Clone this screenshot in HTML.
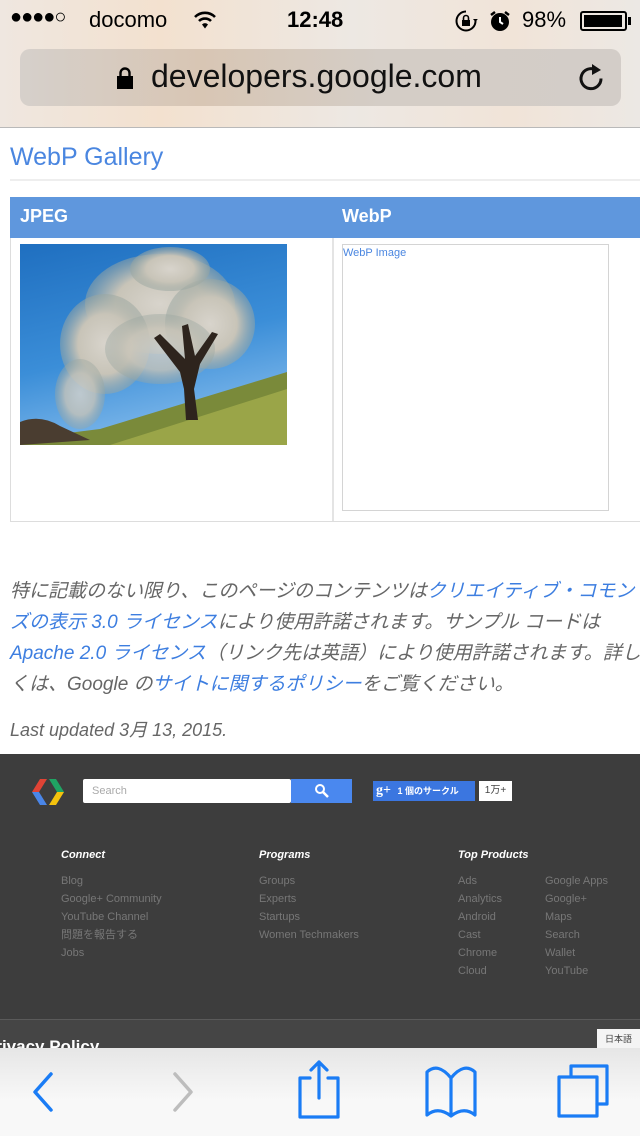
<!DOCTYPE html>
<html><head><meta charset="utf-8">
<style>
*{margin:0;padding:0;box-sizing:border-box}
body{width:640px;height:1136px;overflow:hidden;background:#fff;font-family:"Liberation Sans","Noto Sans CJK JP",sans-serif;position:relative}
.abs{position:absolute}
#top{left:0;top:0;width:640px;height:128px;background:linear-gradient(90deg,#efe7e0 0%,#f3e1cf 25%,#ede8e3 55%,#f1e4d8 80%,#ece8e4 100%);border-bottom:1px solid #b9b9b9}
.sb{font-size:22px;color:#000;top:7px}
#url{left:20px;top:49px;width:601px;height:57px;border-radius:10px;background:linear-gradient(90deg,#d6d0cb,#d8c6b4 30%,#d4cdc6 60%,#d3cdc8)}
.ft{color:#777;font-size:11px;line-height:18px}
.fh{color:#fff;font-size:11px;font-weight:bold;font-style:italic}
.blue{color:#3d7ee0}
</style></head><body>
<div id="top" class="abs">
  <div class="abs sb" style="left:10px;top:6px;font-size:20px;letter-spacing:-1px">●●●●○</div>
  <div class="abs sb" style="left:89px">docomo</div>
  <svg class="abs" style="left:193px;top:10px" width="24" height="20" viewBox="0 0 24 20"><path d="M2 7a14 14 0 0 1 20 0" stroke="#000" stroke-width="2.6" fill="none"/><path d="M6 11a8.5 8.5 0 0 1 12 0" stroke="#000" stroke-width="2.6" fill="none"/><path d="M9 14.5l3 4 3-4a4 4 0 0 0-6 0z" fill="#000"/></svg>
  <div class="abs sb" style="left:287px;font-weight:bold">12:48</div>
  <svg class="abs" style="left:454px;top:9px" width="24" height="24" viewBox="0 0 24 24"><path d="M12 2.5a9.5 9.5 0 1 0 9.5 9.5" stroke="#000" stroke-width="2" fill="none"/><path d="M19 10l2.5 3 2.3-3z" fill="#000"/><rect x="8" y="11" width="8" height="6" fill="#000"/><path d="M9.5 11V9a2.5 2.5 0 0 1 5 0v2" stroke="#000" stroke-width="1.6" fill="none"/></svg>
  <svg class="abs" style="left:488px;top:9px" width="24" height="24" viewBox="0 0 24 24"><circle cx="12" cy="13" r="9" fill="#000"/><path d="M12 8v5l3 2" stroke="#fff" stroke-width="2" fill="none"/><path d="M3 6l4-3M21 6l-4-3" stroke="#000" stroke-width="2.5"/></svg>
  <div class="abs sb" style="left:522px">98%</div>
  <div class="abs" style="left:580px;top:11px;width:47px;height:20px;border:2px solid #000;border-radius:3px;padding:2px"><div style="width:38px;height:12px;background:#000"></div></div>
  <div class="abs" style="left:628px;top:17px;width:3px;height:8px;background:#000"></div>
  <div id="url" class="abs"></div>
  <svg class="abs" style="left:116px;top:66px" width="18" height="24" viewBox="0 0 18 24"><rect x="1" y="10" width="16" height="13" fill="#000"/><path d="M4.5 10V7a4.5 4.5 0 0 1 9 0v3" stroke="#000" stroke-width="2.4" fill="none"/></svg>
  <div class="abs" style="left:151px;top:58px;font-size:32px;color:#111">developers.google.com</div>
  <svg class="abs" style="left:575px;top:62px" width="32" height="32" viewBox="0 0 32 32"><path d="M21 8a10 10 0 1 0 5 8.5" stroke="#111" stroke-width="3" fill="none"/><path d="M17 2l9 6-9 5z" fill="#111"/></svg>
</div>

<div class="abs blue" style="left:10px;top:143px;font-size:25px;color:#4a86e0">WebP Gallery</div>
<div class="abs" style="left:10px;top:179px;width:630px;height:2px;background:#eee"></div>

<div class="abs" style="left:10px;top:197px;width:630px;height:41px;background:#5f97dd"></div>
<div class="abs" style="left:20px;top:206px;font-size:18px;font-weight:bold;color:#fff">JPEG</div>
<div class="abs" style="left:342px;top:206px;font-size:18px;font-weight:bold;color:#fff">WebP</div>
<div class="abs" style="left:10px;top:238px;width:640px;height:284px;border:1px solid #ddd;border-top:none"></div>
<div class="abs" style="left:332px;top:238px;width:2px;height:283px;background:#e4e4e4"></div>

<svg class="abs" style="left:20px;top:244px" width="267" height="201" viewBox="0 0 267 201">
<defs><linearGradient id="sky" x1="0" y1="0" x2="0.3" y2="1"><stop offset="0" stop-color="#1f6fc0"/><stop offset="0.6" stop-color="#3b8ed8"/><stop offset="1" stop-color="#7db7ea"/></linearGradient>
<radialGradient id="bl"><stop offset="0" stop-color="#d8d4cc"/><stop offset="0.6" stop-color="#c8c4b8"/><stop offset="1" stop-color="#9aa6a0" stop-opacity="0.5"/></radialGradient></defs>
<rect width="267" height="201" fill="url(#sky)"/>
<path d="M0 195 L80 185 L267 128 L267 201 L0 201z" fill="#7a8a3a"/>
<path d="M90 201 L267 145 L267 201z" fill="#9aa548"/>
<path d="M0 178 Q20 170 40 182 L70 196 L0 201z" fill="#4a3d30"/>
<ellipse cx="140" cy="60" rx="75" ry="50" fill="url(#bl)"/>
<ellipse cx="85" cy="100" rx="45" ry="50" fill="url(#bl)"/>
<ellipse cx="190" cy="80" rx="45" ry="45" fill="url(#bl)"/>
<ellipse cx="60" cy="150" rx="25" ry="35" fill="url(#bl)" opacity="0.8"/>
<ellipse cx="150" cy="25" rx="40" ry="22" fill="url(#bl)"/>
<ellipse cx="140" cy="105" rx="55" ry="35" fill="url(#bl)" opacity="0.8"/>
<path d="M166 176 L178 176 L174 145 L180 120 L198 90 L192 88 L175 112 L168 80 L162 82 L165 115 L140 90 L134 94 L160 128 L164 145z" fill="#2e241d"/>
</svg>

<div class="abs" style="left:342px;top:244px;width:267px;height:267px;border:1px solid #d4d4d4"></div>
<div class="abs" style="left:343px;top:247px;font-size:11px;color:#4a86e0">WebP Image</div>

<div class="abs" style="left:10px;top:576px;width:640px;font-size:19px;line-height:31px;font-style:italic;color:#666;white-space:nowrap">
特に記載のない限り、このページのコンテンツは<span class="blue">クリエイティブ・コモン</span><br>
<span class="blue">ズの表示 3.0 ライセンス</span>により使用許諾されます。サンプル コードは<br>
<span class="blue">Apache 2.0 ライセンス</span>（リンク先は英語）により使用許諾されます。詳し<br>
くは、Google の<span class="blue">サイトに関するポリシー</span>をご覧ください。
</div>
<div class="abs" style="left:10px;top:716px;font-size:18px;font-style:italic;color:#666">Last updated 3月 13, 2015.</div>

<div class="abs" style="left:0;top:754px;width:640px;height:266px;background:#3d3d3d"></div>
<div class="abs" style="left:0;top:1019px;width:640px;height:1px;background:#5a5a5a"></div>
<div class="abs" style="left:0;top:1020px;width:640px;height:30px;background:#454545"></div>
<svg class="abs" style="left:31px;top:776px" width="34" height="32" viewBox="0 0 34 32">
<path d="M9 3 L16 3 L8 16 L1 16z" fill="#e04335"/>
<path d="M1 16 L8 16 L16 29 L9 29z" fill="#4a86e8"/>
<path d="M18 3 L25 3 L33 16 L26 16z" fill="#1fa463"/>
<path d="M26 16 L33 16 L25 29 L18 29z" fill="#f4c20d"/>
</svg>
<div class="abs" style="left:83px;top:779px;width:208px;height:24px;background:#fff;border-radius:2px;font-size:11px;color:#aaa;padding:6px 9px">Search</div>
<div class="abs" style="left:291px;top:779px;width:61px;height:24px;background:#4a88ef"></div>
<svg class="abs" style="left:314px;top:783px" width="16" height="16" viewBox="0 0 16 16"><circle cx="6" cy="6" r="4" stroke="#fff" stroke-width="2" fill="none"/><path d="M9 9l5 5" stroke="#fff" stroke-width="2.5"/></svg>
<div class="abs" style="left:373px;top:781px;width:102px;height:20px;background:#3b76e0;color:#fff;font-size:9px;font-weight:bold;line-height:20px"><span style="font-size:14px;font-family:'Liberation Serif',serif;padding:0 4px 0 3px">g+</span> 1 個のサークル</div>
<div class="abs" style="left:479px;top:781px;width:33px;height:20px;background:#fff;font-size:10px;color:#444;line-height:20px;text-align:center">1万+</div>

<div class="abs fh" style="left:61px;top:849px">Connect</div>
<div class="abs fh" style="left:259px;top:849px">Programs</div>
<div class="abs fh" style="left:458px;top:849px">Top Products</div>
<div class="abs ft" style="left:61px;top:872px">Blog<br>Google+ Community<br>YouTube Channel<br>問題を報告する<br>Jobs</div>
<div class="abs ft" style="left:259px;top:872px">Groups<br>Experts<br>Startups<br>Women Techmakers</div>
<div class="abs ft" style="left:458px;top:872px">Ads<br>Analytics<br>Android<br>Cast<br>Chrome<br>Cloud</div>
<div class="abs ft" style="left:545px;top:872px">Google Apps<br>Google+<br>Maps<br>Search<br>Wallet<br>YouTube</div>
<div class="abs" style="left:-16px;top:1037px;font-size:17px;font-weight:bold;color:#fff">Privacy Policy</div>
<div class="abs" style="left:597px;top:1029px;width:43px;height:20px;background:#f4f4f4;font-size:9px;color:#444;line-height:20px;text-align:center">日本語</div>

<div class="abs" style="left:0;top:1048px;width:640px;height:88px;background:linear-gradient(#e6e6e6,#f8f8f8 60%,#f8f8f8)"></div>
<svg class="abs" style="left:0;top:1048px" width="640" height="88" viewBox="0 0 640 88">
<g fill="none" stroke-width="3.5" stroke-linecap="round" stroke-linejoin="round">
<path d="M51 26 L35 44 L51 62" stroke="#1a7cf5"/>
<path d="M175 26 L191 44 L175 62" stroke="#bdbdbd"/>
<g stroke="#1a7cf5" stroke-width="3.2">
<path d="M310 30 H300 V69 H338 V30 H328"/>
<path d="M319 50 V14 M311 22 L319 14 L327 22"/>
<path d="M451 30 Q438 14 427 24 V67 Q438 58 451 68 Q464 58 475 67 V24 Q464 14 451 30 V68"/>
<path d="M571 28 V18 H607 V56 H597"/>
<rect x="559" y="29" width="38" height="39"/>
</g></g></svg>
</body></html>
